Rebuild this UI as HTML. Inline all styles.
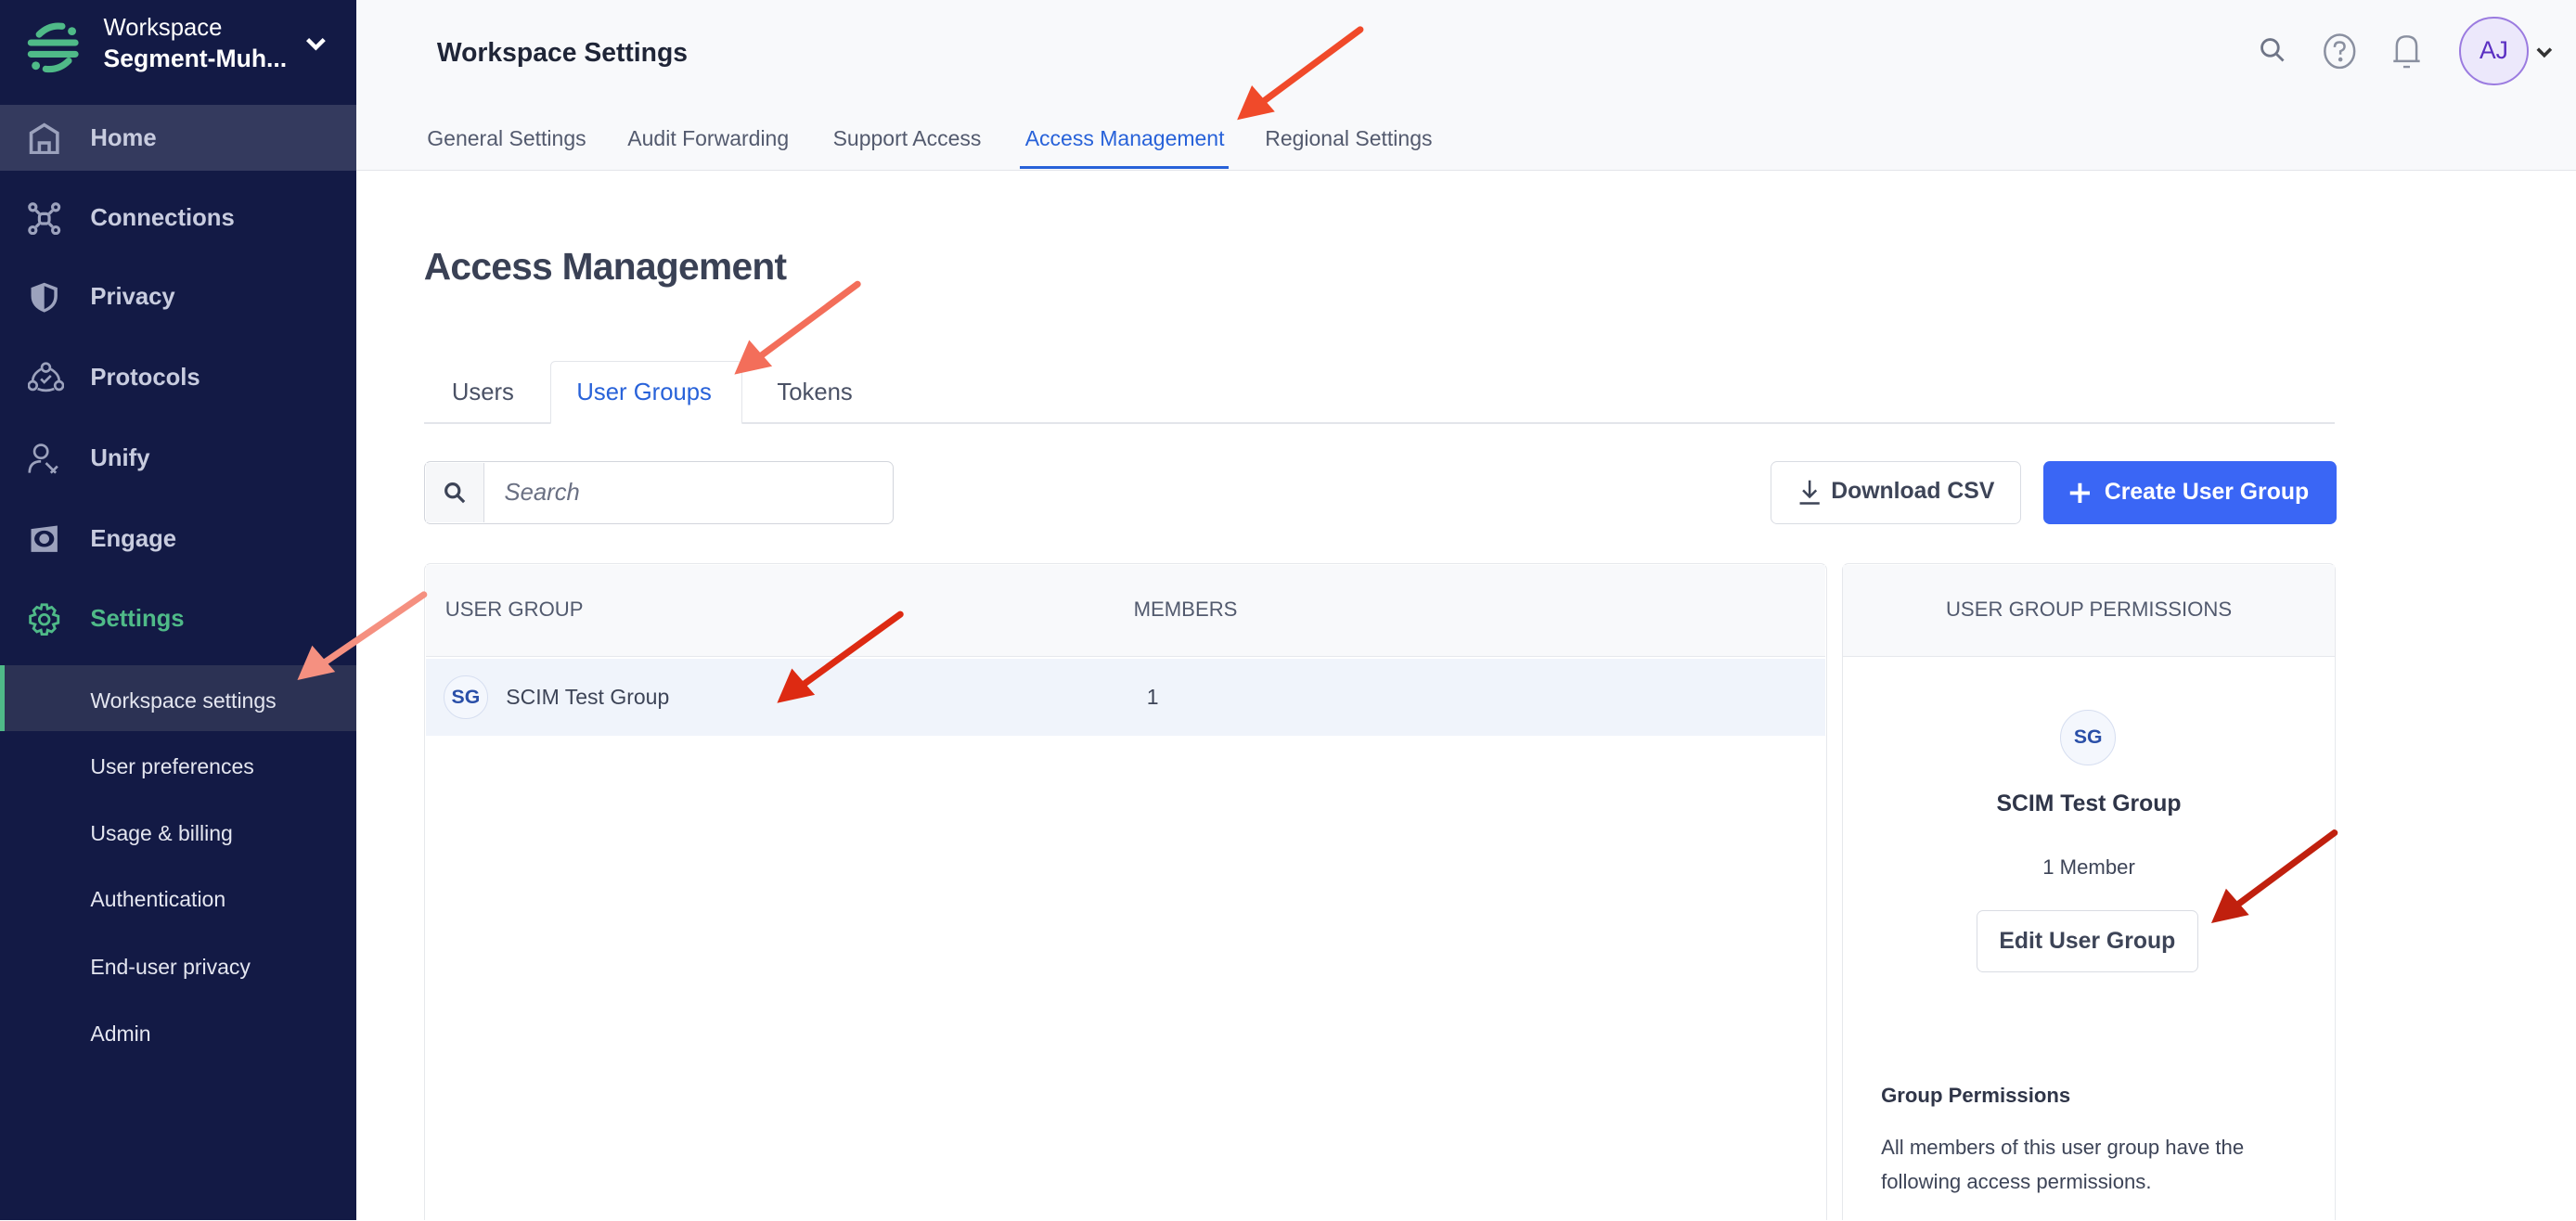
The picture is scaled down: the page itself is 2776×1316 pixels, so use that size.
<!DOCTYPE html>
<html><head><meta charset="utf-8"><style>
*{box-sizing:border-box;margin:0;padding:0}
html,body{width:2776px;height:1316px;overflow:hidden;background:#fff}
#r{zoom:1.7704;width:1568px;height:743px;position:relative;font-family:"Liberation Sans",sans-serif;overflow:hidden}
.a{position:absolute}
.sb{left:0;top:0;width:217px;height:743px;background:#131a45}
.ni{position:absolute;left:0;width:217px;height:40px;color:#c8ccdf;font-size:14.5px;font-weight:bold}
.ni span{position:absolute;left:55px;top:12px}
.ni svg{position:absolute;left:17px;top:10px}
.si{position:absolute;left:55px;color:#e4e6f0;font-size:13px}
.tb{left:217px;top:0;width:1351px;height:104px;background:#f8f9fb;border-bottom:1px solid #e3e5ea}
.tab{position:absolute;top:77px;font-size:13px;color:#535a6e}
.btn{position:absolute;border:1px solid #d9dce3;border-radius:4px;background:#fff;font-size:14px;color:#3d4457}
</style></head><body><div id="r">
<div class="a sb">
 <svg class="a" style="left:16px;top:13px" width="34" height="32" viewBox="0 0 34 32"><path d="M8 8 Q14 2 22 3" stroke="#4fba88" stroke-width="4" fill="none" stroke-linecap="round"/><circle cx="28" cy="6" r="2.5" fill="#4fba88"/><path d="M3 13 H30" stroke="#4fba88" stroke-width="4" stroke-linecap="round"/><path d="M3 20 H30" stroke="#4fba88" stroke-width="4" stroke-linecap="round"/><circle cx="6" cy="27" r="2.5" fill="#4fba88"/><path d="M12 29 Q20 30 26 24" stroke="#4fba88" stroke-width="4" fill="none" stroke-linecap="round"/></svg>
 <div class="a" style="left:63px;top:9px;color:#fff;font-size:14.5px">Workspace</div>
 <div class="a" style="left:63px;top:27px;color:#fff;font-size:15px;font-weight:bold">Segment-Muh...</div>
 <svg class="a" style="left:185px;top:22px" width="14" height="10"><path d="M2 2 L7 7 L12 2" stroke="#fff" stroke-width="2.5" fill="none"/></svg>
 <div class="ni" style="top:64px;background:#343a5e"><svg width="20" height="20" viewBox="0 0 20 20"><path d="M2 19 V7 L10 2 L18 7 V19 Z M7 19 V13 H13 V19" stroke="#9ca2bd" stroke-width="2" fill="none"/></svg><span>Home</span></div>
 <div class="ni" style="top:113px"><svg width="20" height="20" viewBox="0 0 20 20" stroke="#9ca2bd" stroke-width="1.8" fill="none"><circle cx="3" cy="3" r="2"/><circle cx="17" cy="3" r="2"/><circle cx="3" cy="17" r="2"/><circle cx="17" cy="17" r="2"/><path d="M5 5 L7 7 M15 5 L13 7 M5 15 L7 13 M15 15 L13 13"/><rect x="7" y="7" width="6" height="6" rx="2"/></svg><span>Connections</span></div>
 <div class="ni" style="top:161px"><svg width="20" height="20" viewBox="0 0 20 20"><path d="M10 1 L18 4 V9 Q18 16 10 19 Q2 16 2 9 V4 Z" fill="#9ca2bd"/><path d="M10 3 L16 5.5 V9 Q16 14.5 10 17 Z" fill="#131a45"/></svg><span>Privacy</span></div>
 <div class="ni" style="top:210px"><svg width="22" height="20" viewBox="0 0 22 20" stroke="#9ca2bd" stroke-width="1.5" fill="none"><circle cx="11" cy="4" r="2.5"/><circle cx="3" cy="15" r="2.5"/><circle cx="19" cy="15" r="2.5"/><path d="M8 5 Q3 8 3 12 M14 5 Q19 8 19 12 M6 17 Q11 19 16 17 M8 11 L10 13 L14 9"/></svg><span>Protocols</span></div>
 <div class="ni" style="top:259px"><svg width="20" height="20" viewBox="0 0 20 20" stroke="#9ca2bd" stroke-width="1.5" fill="none"><circle cx="8" cy="6" r="4"/><path d="M1 19 Q1 12 8 12 M11 13 L17 19 M14 19 L18 15"/></svg><span>Unify</span></div>
 <div class="ni" style="top:308px"><svg width="20" height="20" viewBox="0 0 20 20"><path d="M2 4 L18 2 V18 H2 Z" fill="#9ca2bd"/><ellipse cx="10" cy="10" rx="6" ry="5" fill="#131a45"/><circle cx="10" cy="10" r="3" fill="#9ca2bd"/></svg><span>Engage</span></div>
 <div class="ni" style="top:357px;color:#4fba88"><svg width="20" height="20" viewBox="0 0 20 20" stroke="#4fba88" stroke-width="1.6" fill="none"><path d="M8.5 1 H11.5 L12 3.5 L14.5 2.5 L16.5 4.5 L15.5 7 L18.5 8 V12 L15.5 13 L16.5 15.5 L14.5 17.5 L12 16.5 L11.5 19 H8.5 L8 16.5 L5.5 17.5 L3.5 15.5 L4.5 13 L1.5 12 V8 L4.5 7 L3.5 4.5 L5.5 2.5 L8 3.5 Z"/><circle cx="10" cy="10" r="3"/></svg><span>Settings</span></div>
 <div class="a" style="left:0;top:405px;width:217px;height:40px;background:#2c3254;border-left:3px solid #4fba88"></div>
 <div class="si" style="top:419px">Workspace settings</div>
 <div class="si" style="top:459px">User preferences</div>
 <div class="si" style="top:500px">Usage &amp; billing</div>
 <div class="si" style="top:540px">Authentication</div>
 <div class="si" style="top:581px">End-user privacy</div>
 <div class="si" style="top:622px">Admin</div>
</div>
<div class="a tb">
 <div class="a" style="left:49px;top:23px;font-size:16px;font-weight:bold;color:#1f2537">Workspace Settings</div>
 <div class="tab" style="left:43px">General Settings</div>
 <div class="tab" style="left:165px">Audit Forwarding</div>
 <div class="tab" style="left:290px">Support Access</div>
 <div class="tab" style="left:407px;color:#2862d9">Access Management</div>
 <div class="a" style="left:404px;top:101px;width:127px;height:2px;background:#2862d9"></div>
 <div class="tab" style="left:553px">Regional Settings</div>
 <svg class="a" style="left:1158px;top:22px" width="18" height="18" viewBox="0 0 18 18" stroke="#6f7587" stroke-width="1.6" fill="none"><circle cx="7" cy="7" r="5"/><path d="M11 11 L15 15"/></svg>
 <svg class="a" style="left:1195px;top:19px" width="24" height="24" viewBox="0 0 24 24" stroke="#8a90a0" stroke-width="1.4" fill="none"><ellipse cx="12" cy="12" rx="9" ry="10"/><path d="M9 9.5 Q9 6.5 12 6.5 Q15 6.5 15 9.2 Q15 11 12.5 12 V14"/><circle cx="12.5" cy="17" r="0.6" fill="#8a90a0"/></svg>
 <svg class="a" style="left:1237px;top:19px" width="22" height="24" viewBox="0 0 22 24" stroke="#8a90a0" stroke-width="1.4" fill="none"><path d="M5 18 V9 Q5 3 11 3 Q17 3 17 9 V18 M3 18 H19 M9 21.5 H13"/></svg>
 <div class="a" style="left:1280px;top:10px;width:42px;height:42px;border-radius:50%;background:#ece8fb;border:1.5px solid #9b7be0;color:#5a2fc2;font-size:15px;text-align:center;line-height:39px">AJ</div>
 <svg class="a" style="left:1327px;top:28px" width="10" height="8"><path d="M1 1.5 L5 5.5 L9 1.5" stroke="#333" stroke-width="2" fill="none"/></svg>
</div>
<div class="a" style="left:258px;top:149px;font-size:23px;color:#3a4155;font-weight:bold;letter-spacing:-0.4px">Access Management</div>
<div class="a" style="left:258px;top:257px;width:1163px;height:1px;background:#e3e5ea"></div>
<div class="a" style="left:335px;top:220px;width:117px;height:38px;border:1px solid #e3e5ea;border-bottom:1px solid #fff;background:#fff;border-radius:3px 3px 0 0"></div>
<div class="a" style="left:275px;top:231px;font-size:14.5px;color:#4a5165">Users</div>
<div class="a" style="left:351px;top:231px;font-size:14.5px;color:#2862d9">User Groups</div>
<div class="a" style="left:473px;top:231px;font-size:14.5px;color:#4a5165">Tokens</div>
<div class="a" style="left:258px;top:281px;width:286px;height:38px;border:1px solid #d2d5dc;border-radius:4px;background:#fff"></div>
<div class="a" style="left:259px;top:282px;width:36px;height:36px;background:#f6f7f9;border-right:1px solid #d9dce3"></div>
<svg class="a" style="left:270px;top:293px" width="14" height="14" viewBox="0 0 14 14" stroke="#3d4457" stroke-width="1.8" fill="none"><circle cx="5.5" cy="5.5" r="4"/><path d="M8.5 8.5 L12.5 12.5"/></svg>
<div class="a" style="left:307px;top:292px;font-size:14.5px;color:#6a7083;font-style:italic">Search</div>
<div class="btn" style="left:1078px;top:281px;width:152px;height:38px"><svg class="a" style="left:15px;top:10px" width="16" height="17" viewBox="0 0 16 17" stroke="#3d4457" stroke-width="1.4" fill="none"><path d="M8 1 V11 M4 7 L8 11 L12 7 M2 15 H14"/></svg><span class="a" style="left:36px;top:10px;font-weight:bold">Download CSV</span></div>
<div class="a" style="left:1244px;top:281px;width:178px;height:38px;background:#3a66f5;border-radius:4px;color:#fff;font-size:14px;font-weight:bold"><svg class="a" style="left:15px;top:12px" width="14" height="14" stroke="#fff" stroke-width="2.2"><path d="M7 1 V13 M1 7 H13"/></svg><span class="a" style="left:37px;top:11px">Create User Group</span></div>
<div class="a" style="left:258px;top:343px;width:854px;height:420px;border:1px solid #e6e8ec;border-radius:4px;background:#fff"></div>
<div class="a" style="left:259px;top:344px;width:852px;height:56px;background:#f8f9fb;border-bottom:1px solid #e6e8ec"></div>
<div class="a" style="left:271px;top:364px;font-size:12.5px;color:#525a6e">USER GROUP</div>
<div class="a" style="left:690px;top:364px;font-size:12.5px;color:#525a6e">MEMBERS</div>
<div class="a" style="left:259px;top:401px;width:852px;height:47px;background:#f0f4fb"></div>
<div class="a" style="left:270px;top:411px;width:27px;height:27px;border-radius:50%;border:1px solid #d6def0;background:#f4f7fd;color:#2a4fa8;font-size:12px;font-weight:bold;text-align:center;line-height:25px">SG</div>
<div class="a" style="left:308px;top:417px;font-size:13px;color:#3d4457">SCIM Test Group</div>
<div class="a" style="left:698px;top:417px;font-size:13px;color:#3d4457">1</div>
<div class="a" style="left:1121px;top:343px;width:301px;height:420px;border:1px solid #e6e8ec;border-radius:4px;background:#fff"></div>
<div class="a" style="left:1122px;top:344px;width:299px;height:56px;background:#f8f9fb;border-bottom:1px solid #e6e8ec"></div>
<div class="a" style="left:1121px;top:364px;width:301px;text-align:center;font-size:12.5px;color:#525a6e">USER GROUP PERMISSIONS</div>
<div class="a" style="left:1254px;top:432px;width:34px;height:34px;border-radius:50%;border:1px solid #d6def0;background:#f4f7fd;color:#2a4fa8;font-size:12px;font-weight:bold;text-align:center;line-height:32px">SG</div>
<div class="a" style="left:1121px;top:482px;width:301px;text-align:center;font-size:14px;color:#2f3548;font-weight:bold">SCIM Test Group</div>
<div class="a" style="left:1121px;top:521px;width:301px;text-align:center;font-size:12.5px;color:#3d4457">1 Member</div>
<div class="btn" style="left:1203px;top:554px;width:135px;height:38px;font-weight:bold;text-align:center;line-height:37px">Edit User Group</div>
<div class="a" style="left:1145px;top:660px;font-size:12.5px;color:#2f3548;font-weight:bold">Group Permissions</div>
<div class="a" style="left:1145px;top:688px;font-size:12.5px;color:#3d4457;line-height:21px;width:260px">All members of this user group have the following access permissions.</div>
<svg class="a" style="left:0;top:0" width="1568" height="743">
<g stroke-width="4" stroke-linecap="round">
<line x1="828" y1="18" x2="770" y2="61" stroke="#f04a2a"/><polygon points="753,73 762,52 776,68" fill="#f04a2a"/>
<line x1="522" y1="173" x2="464" y2="216" stroke="#f36e5a"/><polygon points="447,228 456,207 470,223" fill="#f36e5a"/>
<line x1="258" y1="362" x2="198" y2="403" stroke="#f59080"/><polygon points="181,414 190,393 204,409" fill="#f59080"/>
<line x1="548" y1="374" x2="490" y2="416" stroke="#dd2a12"/><polygon points="473,428 482,407 496,423" fill="#dd2a12"/>
<line x1="1421" y1="507" x2="1363" y2="550" stroke="#c0200e"/><polygon points="1346,562 1355,541 1369,557" fill="#c0200e"/>
</g></svg>
</div></body></html>
